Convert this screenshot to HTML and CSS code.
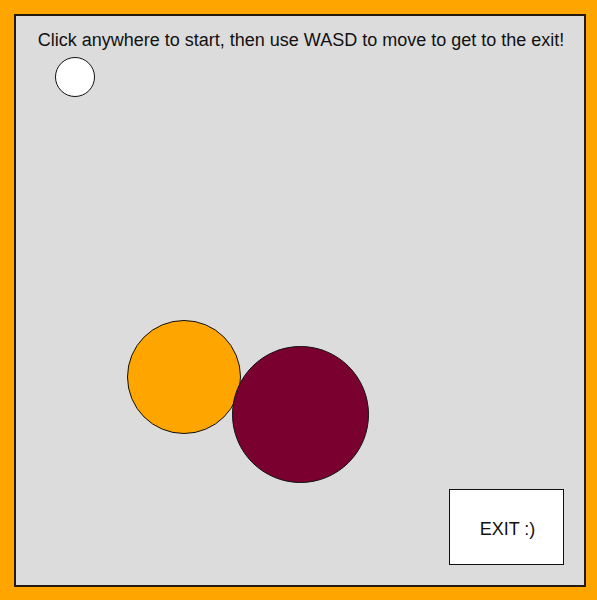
FILE: index.html
```html
<!DOCTYPE html>
<html>
<head>
<meta charset="utf-8">
<link rel="stylesheet" href="styles.css">
</head>
<body>
<div class="arena">
  <p class="hint">Click anywhere to start, then use WASD to move to get to the exit!</p>
  <div class="ball player"></div>
  <div class="ball orange"></div>
  <div class="ball maroon"></div>
  <div class="exit">EXIT :)</div>
</div>
</body>
</html>
```
FILE: styles.css
```css
html, body {
  margin: 0;
  padding: 0;
}
body {
  width: 597px;
  height: 600px;
  overflow: hidden;
  background: #ffa500;
  font-family: "Liberation Sans", Arial, sans-serif;
}
.arena {
  position: relative;
  box-sizing: border-box;
  margin: 14px 0 0 14px;
  width: 572px;
  height: 573px;
  border: 2px solid #241a10;
  background: #dcdcdc;
}
.hint {
  margin: 0;
  padding-top: 14px;
  padding-left: 2px;
  text-align: center;
  font-size: 18px;
  color: #111;
}
.ball {
  position: absolute;
  box-sizing: border-box;
  border: 1.5px solid #111;
  border-radius: 50%;
}
.player {
  left: 39px;
  top: 41px;
  width: 40px;
  height: 40px;
  background: #fff;
}
.orange {
  left: 111px;
  top: 304px;
  width: 114px;
  height: 114px;
  background: #ffa500;
}
.maroon {
  left: 216px;
  top: 330px;
  width: 137px;
  height: 137px;
  background: #7a0030;
}
.exit {
  position: absolute;
  box-sizing: border-box;
  left: 433px;
  top: 473px;
  width: 115px;
  height: 76px;
  border: 1px solid #111;
  background: #fff;
  display: flex;
  align-items: center;
  justify-content: center;
  padding-top: 5px;
  padding-left: 2px;
  font-size: 18px;
  color: #111;
}
```
